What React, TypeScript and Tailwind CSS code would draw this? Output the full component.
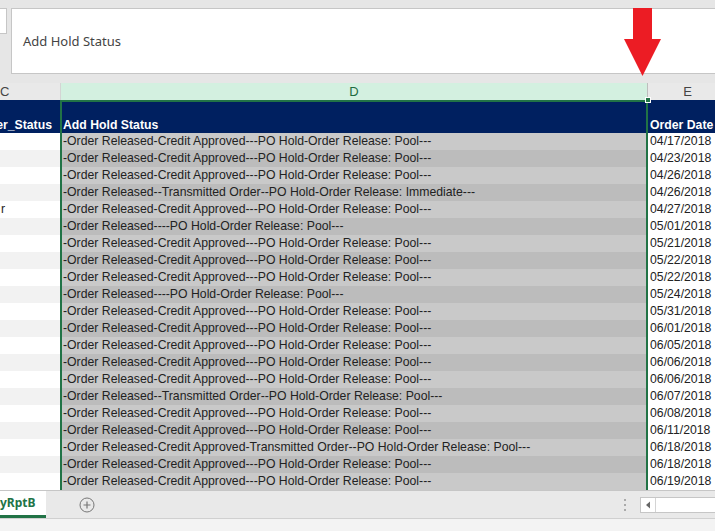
const CA = '-Order Released-Credit Approved---PO Hold-Order Release: Pool---'
const RP = '-Order Released----PO Hold-Order Release: Pool---'

const rows: { status: string; date: string; c?: string }[] = [
  { status: CA, date: '04/17/2018' },
  { status: CA, date: '04/23/2018' },
  { status: CA, date: '04/26/2018' },
  { status: '-Order Released--Transmitted Order--PO Hold-Order Release: Immediate---', date: '04/26/2018' },
  { status: CA, date: '04/27/2018', c: 'r' },
  { status: RP, date: '05/01/2018' },
  { status: CA, date: '05/21/2018' },
  { status: CA, date: '05/22/2018' },
  { status: CA, date: '05/22/2018' },
  { status: RP, date: '05/24/2018' },
  { status: CA, date: '05/31/2018' },
  { status: CA, date: '06/01/2018' },
  { status: CA, date: '06/05/2018' },
  { status: CA, date: '06/06/2018' },
  { status: CA, date: '06/06/2018' },
  { status: '-Order Released--Transmitted Order--PO Hold-Order Release: Pool---', date: '06/07/2018' },
  { status: CA, date: '06/08/2018' },
  { status: CA, date: '06/11/2018' },
  { status: '-Order Released-Credit Approved-Transmitted Order--PO Hold-Order Release: Pool---', date: '06/18/2018' },
  { status: CA, date: '06/18/2018' },
  { status: CA, date: '06/19/2018' },
]

const cellFont = "font-['Liberation_Sans',Arial,sans-serif] text-[12.25px] leading-[17px]"

export default function App() {
  return (
    <div className="relative flex h-[531px] w-[715px] flex-col overflow-hidden bg-[#e6e6e6]">
      {/* formula bar */}
      <div className="flex h-[83px] shrink-0 pt-[8px]">
        <div className="h-[26px] w-[7px] border border-l-0 border-[#c6c6c6] bg-white" />
        <div className="ml-[4px] flex h-[66px] flex-1 items-center border border-r-0 border-[#c6c6c6] bg-white pl-[11px] pt-[2px] font-['Noto_Sans',sans-serif] text-[13px] text-[#444]">
          Add Hold Status
        </div>
      </div>

      {/* column letters */}
      <div className="flex h-[17px] shrink-0 font-['Liberation_Sans',Arial,sans-serif] text-[13px] leading-[17px]">
        <div className="w-[61px] border-r border-[#d4d4d4] bg-[#e9e9e9] text-[#444]">C</div>
        <div className="w-[586px] bg-[#d3f0e0] text-center text-[#1e6b41]">D</div>
        <div className="flex-1 border-l border-[#bdbdbd] bg-[#e9e9e9] pl-[12px] text-center text-[#444]">E</div>
      </div>

      {/* grid */}
      <div className={`flex h-[390px] shrink-0 ${cellFont}`}>
        <div className="w-[60px]">
          <div className="flex h-[33px] items-end justify-end bg-[#002060] pr-[8px] font-bold leading-[15px] text-white">
            er_Status
          </div>
          {rows.map((r, i) => (
            <div key={i} className={`h-[17px] pl-[1px] text-[#222] ${i % 2 ? 'bg-[#f2f2f2]' : 'bg-white'}`}>
              {r.c ?? ''}
            </div>
          ))}
        </div>
        <div className="relative w-[588px] border-x-2 border-t-2 border-[#217346]">
          <div className="flex h-[31px] items-end bg-[#002060] pl-[1px] font-bold leading-[15px] text-white">
            Add Hold Status
          </div>
          {rows.map((r, i) => (
            <div
              key={i}
              className={`h-[17px] overflow-hidden whitespace-nowrap pl-[1px] text-[#222] ${i % 2 ? 'bg-[#bcbcbc]' : 'bg-[#c9c9c9]'}`}
            >
              {r.status}
            </div>
          ))}
          <div className="absolute right-[-5px] top-[-5px] h-[6px] w-[6px] border border-white bg-[#217346]" />
        </div>
        <div className="flex-1 bg-white">
          <div className="flex h-[33px] items-end whitespace-nowrap bg-[#002060] pl-[2px] font-bold leading-[15px] text-white">
            Order Date
          </div>
          {rows.map((r, i) => (
            <div key={i} className="h-[17px] whitespace-nowrap pl-[2px] text-[#222]">
              {r.date}
            </div>
          ))}
        </div>
      </div>

      {/* sheet tabs */}
      <div className="flex h-[28px] shrink-0 items-stretch border-t border-[#c6c6c6] bg-[#e9e9e9]">
        <div className="flex w-[46px] items-center border-b-[3px] border-[#217346] bg-white font-['Noto_Sans',sans-serif] text-[12px] font-bold text-[#217346]">
          yRptB
        </div>
        <div className="ml-[33px] flex items-center">
          <svg width="16" height="16" viewBox="0 0 16 16">
            <circle cx="8" cy="8" r="7" fill="none" stroke="#777" strokeWidth="1" />
            <path d="M8 4.5v7M4.5 8h7" stroke="#777" strokeWidth="1.2" />
          </svg>
        </div>
        <div className="flex-1" />
        <div className="flex flex-col items-center justify-center gap-[3px] pr-[14px]">
          <span className="h-[2px] w-[2px] bg-[#aaa]" />
          <span className="h-[2px] w-[2px] bg-[#aaa]" />
          <span className="h-[2px] w-[2px] bg-[#aaa]" />
        </div>
        <div className="mt-[6px] flex h-[16px] w-[75px] border border-r-0 border-[#c6c6c6] bg-white">
          <div className="flex w-[15px] items-center justify-center border-r border-[#d4d4d4]">
            <svg width="6" height="8" viewBox="0 0 6 8">
              <path d="M5 0.5v7L1 4z" fill="#666" />
            </svg>
          </div>
        </div>
      </div>

      {/* status bar */}
      <div className="flex-1 border-t border-[#d0d0d0] bg-[#f3f3f3]" />

      {/* red arrow annotation */}
      <svg className="absolute left-[624px] top-[8px]" width="37" height="69" viewBox="0 0 37 69">
        <path d="M9 0h19v31h9L18.5 68 0 31h9z" fill="#ec1c24" />
      </svg>
    </div>
  )
}
